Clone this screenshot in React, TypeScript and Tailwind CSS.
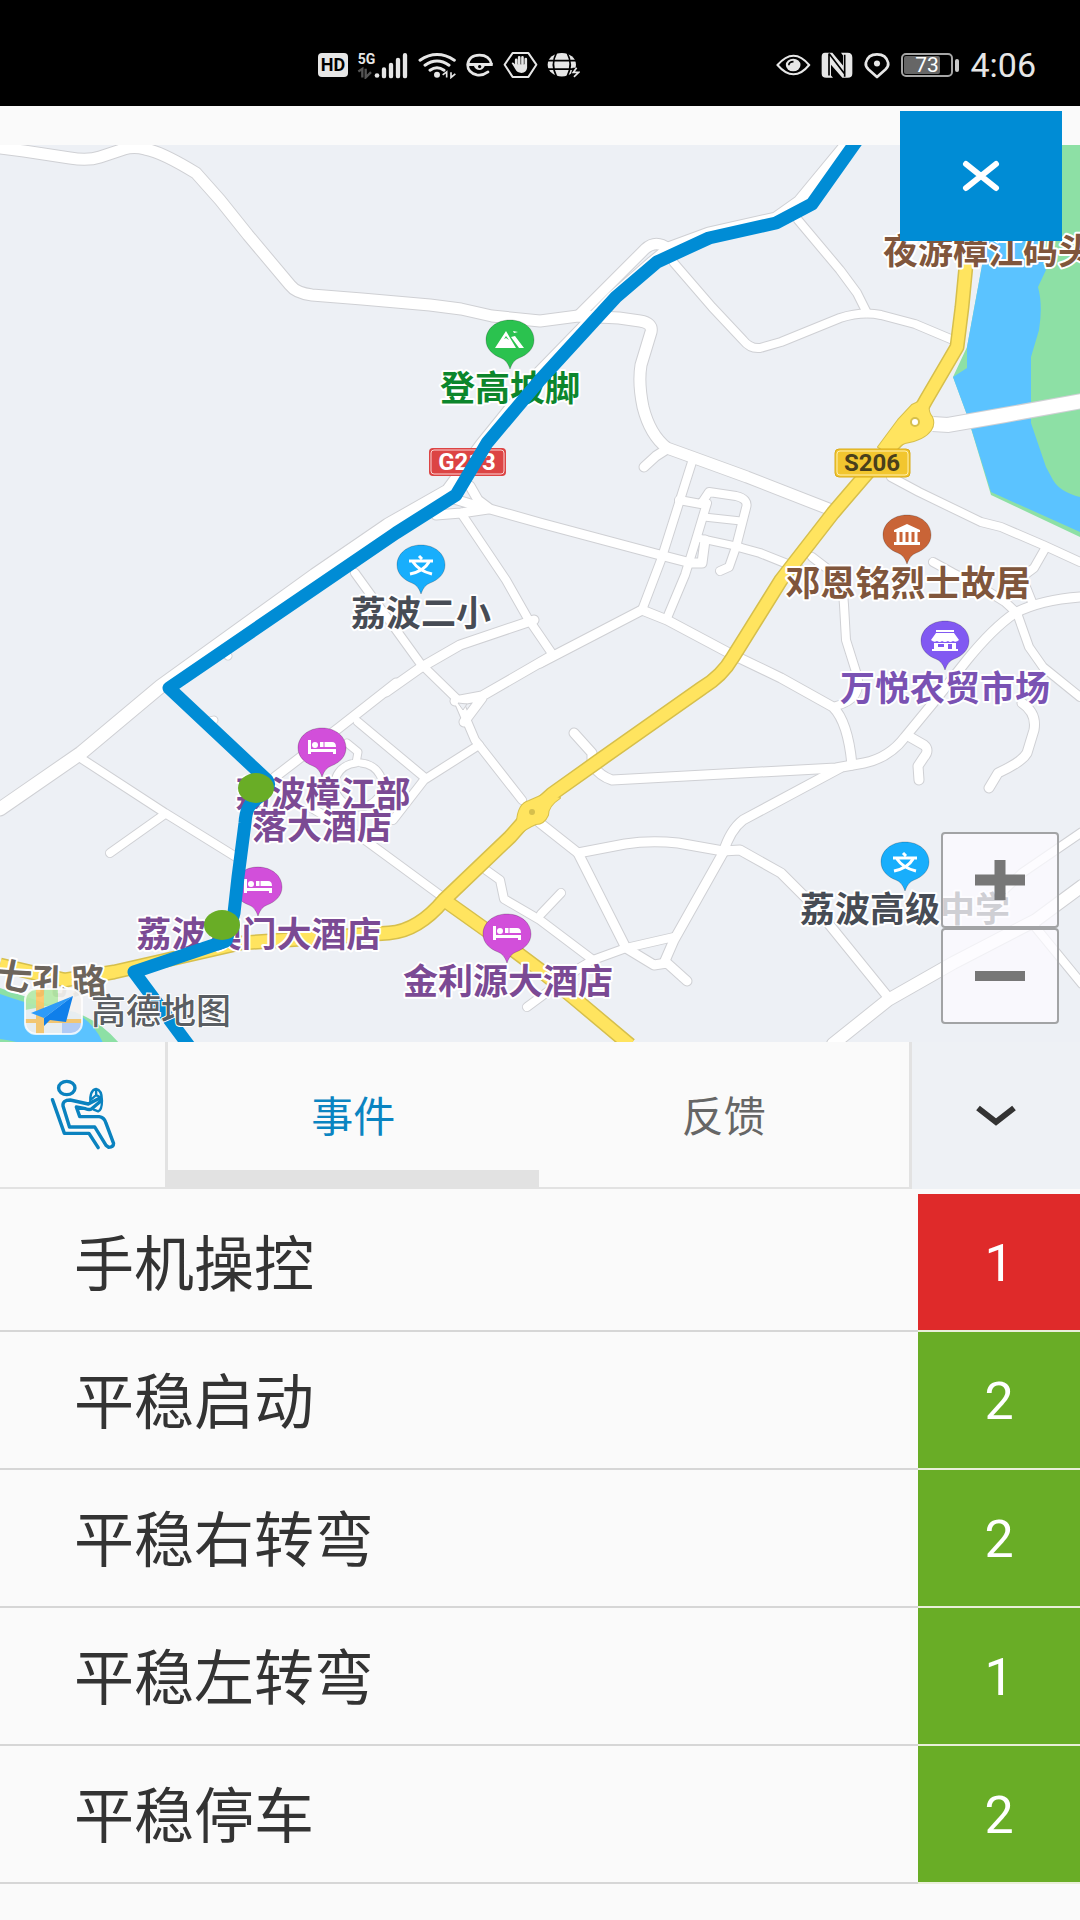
import React, { useState } from "react";

const fontStack = "font-[Roboto,'Noto_Sans_CJK_SC',sans-serif]";

const roads: { d: string; w: number }[] = [
  { w: 11, d: "M0 148 L24 151 L70 158 Q88 161 100 157 L124 149 Q134 146 145 149 Q162 152 196 173 L220 200 L248 235 L290 285 Q296 293 312 295 L362 299 L430 305 L461 309 L492 316 L540 321 L578 316 L619 318 L640 321 Q653 323 651 332 L641 365 Q638 383 643 407 Q650 435 667 448 L692 457 L747 477 L829 509" },
  { w: 9, d: "M667 449 L656 456 L644 467" },
  { w: 8, d: "M798 220 L840 270 L857 293 L867 313" },
  { w: 8, d: "M674 263 L712 307 L743 340 Q750 349 760 348 L781 342 L840 318 Q862 311 881 315 L915 324 L953 340" },
  { w: 13, d: "M847 145 L800 202 L776 219 L709 234 L671 248 L653 263 L612 299 L540 373 L482 445 L448 491 L388 525 L315 575 L161 686 L81 753 L0 809" },
  { w: 10, d: "M578 316 L645 249 Q656 239 669 249" },
  { w: 9, d: "M470 486 L478 500 L490 509 L540 523 L660 555 L691 563 L702 563 L705 540" },
  { w: 9, d: "M436 515 L461 513 L488 509 M454 499 L484 508" },
  { w: 8, d: "M461 513 L506 580 L527 617 L553 655" },
  { w: 8, d: "M355 573 L420 663 L458 700 L475 740 L522 800" },
  { w: 8, d: "M692 462 L661 560 L642 610" },
  { w: 8, d: "M679 500 L701 504 L709 492 L736 496 Q749 499 746 508 L736 547 L729 567 L720 571" },
  { w: 8, d: "M707 503 L695 543 L685 575 L667 618" },
  { w: 7, d: "M704 517 L741 521 M698 538 L740 547" },
  { w: 8, d: "M738 547 L760 553 L800 569" },
  { w: 8, d: "M812 557 L829 570 Q843 582 844 605 L846 640 L857 675 Q863 699 836 706" },
  { w: 8, d: "M891 477 L919 492 L981 522 L1001 527 L1043 545 L1080 562" },
  { w: 8, d: "M1046 547 L1034 568 L1022 577 L1032 602" },
  { w: 8, d: "M933 562 L953 573 L981 587 L1005 602 L1017 613 L1029 647 L1043 667 L1080 697" },
  { w: 9, d: "M1080 597 Q1040 600 1015 613 Q993 628 967 660 L933 703 L905 737 Q889 758 864 763 L836 768 L612 780 Q600 776 592 765 L592 753 L574 733" },
  { w: 9, d: "M840 768 L743 820 Q730 830 723 853 L674 940 L664 963" },
  { w: 9, d: "M910 737 L924 745 Q930 750 924 757 L918 766 L919 780" },
  { w: 9, d: "M1022 703 Q1037 713 1034 730 L1027 753 Q1022 762 998 773 L989 788" },
  { w: 9, d: "M386 692 L420 668 L460 645 L534 620 M540 663 L642 610 L667 620 L729 653 L781 678 L833 707 Q848 722 852 765" },
  { w: 9, d: "M553 655 L482 696 L455 701 M482 698 L464 722" },
  { w: 9, d: "M396 683 L340 727 L275 777" },
  { w: 8, d: "M358 722 L424 777 M479 745 L424 780 L393 820" },
  { w: 7, d: "M347 743 L358 752 L356 763 A24 22 0 1 0 361 763" },
  { w: 8, d: "M310 807 L365 840 L444 898" },
  { w: 8, d: "M79 757 L165 813 L236 857 M165 814 L110 853" },
  { w: 8, d: "M486 870 L500 880 L504 899 L540 920 L593 960 M561 893 L541 914" },
  { w: 8, d: "M527 1007 L581 967 L593 960 L626 948 L674 937" },
  { w: 9, d: "M540 823 L578 853 L626 948 L654 965 L667 963 L687 981" },
  { w: 9, d: "M578 853 L625 844 Q650 840 678 843 L723 851 L740 850 L781 873 L815 907 L888 997" },
  { w: 12, d: "M833 1044 L888 1000 L953 963 L1036 920 L1082 886" },
  { w: 8, d: "M1082 832 L1022 873 L985 908 M1032 923 L1082 984" },
  { w: 7, d: "M222 650 L228 656 M206 722 L214 720" },
];

const yellowRoads =
  "M967 255 L962 307 L957 347 L926 400 L912 425 L881 457 L833 513 L781 580 L733 657 Q722 676 702 688 L597 762 L552 794 L532 812 L510 837 L444 900 Q418 931 389 933 L241 943 L114 972 L65 980 L0 965 M444 900 L496 937 L540 970 L574 998 L630 1045";
const yellowJunctions =
  "M929 397 Q927 412 932 417 Q935 424 931 430 Q924 440 905 443 L886 451 L878 447 L898 420 L912 405 Z M517 822 Q518 804 529 801 L545 794 L560 798 Q548 806 548 815 Q544 824 536 824 Q526 828 517 836 L508 838 Z";

const routePath =
  "M858 139 L812 204 L776 223 L709 238 L657 262 L616 297 L540 380 L487 443 L456 495 L396 533 L169 688 L267 780 Q273 788 255 800 Q246 806 245 823 L238 877 L234 913 L226 941 L134 972 L192 1050";

type PinKind = "hill" | "school" | "bed" | "museum" | "shop";
const pins: { x: number; y: number; color: string; kind: PinKind }[] = [
  { x: 510, y: 340, color: "#2bc24f", kind: "hill" },
  { x: 421, y: 565, color: "#18aefc", kind: "school" },
  { x: 322, y: 748, color: "#d24fda", kind: "bed" },
  { x: 258, y: 887, color: "#d24fda", kind: "bed" },
  { x: 507, y: 934, color: "#d24fda", kind: "bed" },
  { x: 907, y: 535, color: "#c96437", kind: "museum" },
  { x: 945, y: 641, color: "#8159f2", kind: "shop" },
  { x: 905, y: 862, color: "#18aefc", kind: "school" },
];

const places: { x: number; y: number; color: string; text: string }[] = [
  { x: 510, y: 401, color: "#0c862c", text: "登高坡脚" },
  { x: 421, y: 626, color: "#474c55", text: "荔波二小" },
  { x: 323, y: 807, color: "#7b4a94", text: "荔波樟江部" },
  { x: 322, y: 839, color: "#7b4a94", text: "落大酒店" },
  { x: 259, y: 947, color: "#7b4a94", text: "荔波澳门大酒店" },
  { x: 508, y: 994, color: "#7b4a94", text: "金利源大酒店" },
  { x: 908, y: 596, color: "#80563c", text: "邓恩铭烈士故居" },
  { x: 945, y: 701, color: "#7a52b3", text: "万悦农贸市场" },
  { x: 905, y: 922, color: "#474c55", text: "荔波高级中学" },
  { x: 988, y: 264, color: "#80563c", text: "夜游樟江码头" },
];

const roadName: { x: number; y: number; turn: number; text: string }[] = [
  { x: 14, y: 976, turn: 12, text: "七" },
  { x: 50, y: 981, turn: 2, text: "孔" },
  { x: 89, y: 981, turn: -4, text: "路" },
];

function PinGlyph({ kind }: { kind: PinKind }) {
  if (kind === "hill")
    return (
      <g fill="#fff">
        <path fillRule="evenodd" d="M-15 8 L-4 -9 L6 8 Z M-6 -1 L-4 -4 L-1 0 L-4 -2 Z" />
        <path d="M1 -3 L5 -4 L14 8 L9 8 Z M3 -9 L8 -8 L4 -7 Z" />
      </g>
    );
  if (kind === "school")
    return <path d="M-2 -9 L1 -6 M-12 -4 H12 M-8 -3 Q-2 6 11 9 M8 -3 Q3 6 -11 9" fill="none" stroke="#fff" strokeWidth="3" />;
  if (kind === "bed")
    return (
      <g fill="#fff">
        <path d="M-14 -8 H-11 V1 H14 V6 H11 V4 H-11 V6 H-14 Z" />
        <circle cx="-7" cy="-3" r="3" />
        <path d="M-2 -6 H10 Q14 -6 14 -1 H-2 Z" />
        <path d="M2 -6 V-1" stroke="#d24fda" strokeWidth="1" />
      </g>
    );
  if (kind === "museum")
    return (
      <g fill="#fff">
        <path d="M0 -11 L13 -5 V-3 H-13 V-5 Z M-13 7 H13 V10 H-13 Z" />
        <path d="M-9 -3 V7 M-3 -3 V7 M3 -3 V7 M9 -3 V7" stroke="#fff" strokeWidth="3" />
      </g>
    );
  return (
    <g fill="#fff">
      <path d="M-9 -11 H9 V-9 H-9 Z M-9 -8 H9 L14 -1 Q11 2 8 0 Q5 2 3 0 Q0 2 -3 0 Q-5 2 -8 0 Q-11 2 -14 -1 Z" />
      <path fillRule="evenodd" d="M-11 2 H11 V8 H-11 Z M-7 3 V6 H-1 V3 Z M3 3 V8 H7 V3 Z M-13 8 H13 V10 H-13 Z" />
    </g>
  );
}

function MapCanvas() {
  return (
    <svg viewBox="0 145 1080 897" className="block h-auto w-full bg-[#edf0f5]" role="img" aria-label="行程地图">
      <path d="M960 145 H1080 V537 L991 495 L967 415 L953 377 L967 347 L983 260 Z" fill="#8de0a5" />
      <path d="M983 145 L983 260 L967 347 L967 368 L953 377 L967 415 L991 492 L1080 532 L1080 497 Q1060 492 1053 480 L1046 467 L1031 423 L1031 357 L1039 330 Q1043 305 1038 287 L1046 270 L1042 255 L1050 145 Z" fill="#5bc3ff" />
      <path d="M0 988 Q30 998 62 1009 Q95 1015 119 1043 H0 Z" fill="#8de0a5" />
      <path d="M0 994 Q45 1010 75 1012 Q95 1024 103 1043 H20 Q10 1040 0 1039 Z" fill="#5bc3ff" />

      <g fill="none" stroke="#cfd0d4" strokeLinecap="round" strokeLinejoin="round">
        {roads.map((r) => (
          <path key={r.d} d={r.d} strokeWidth={r.w + 2} />
        ))}
      </g>
      <g fill="none" stroke="#ffffff" strokeLinecap="round" strokeLinejoin="round">
        {roads.map((r) => (
          <path key={r.d} d={r.d} strokeWidth={r.w} />
        ))}
      </g>
      <path d="M933 424 L948 425 L1005 415 L1082 401" fill="none" stroke="#cfd0d4" strokeWidth="16" />
      <path d="M932 424 L948 425 L1005 415 L1082 401" fill="none" stroke="#ffffff" strokeWidth="14" />
      <path d="M458 703 L467 704 L463 710 Z" fill="#edf0f5" stroke="#cfd0d4" strokeWidth="1" />

      <path d={yellowJunctions} fill="#d6bf4c" stroke="#d6bf4c" strokeWidth="2" strokeLinejoin="round" />
      <path d={yellowRoads} fill="none" stroke="#d6bf4c" strokeWidth="15" strokeLinejoin="round" />
      <path d={yellowRoads} fill="none" stroke="#ffe45f" strokeWidth="12" strokeLinejoin="round" />
      <path d={yellowJunctions} fill="#ffe45f" />
      <circle cx="915" cy="422" r="4" fill="#fff" stroke="#d6bf4c" strokeWidth="2" />
      <circle cx="532" cy="812" r="3" fill="#d6bf4c" />

      {pins.map((p) => (
        <g key={`${p.x}-${p.y}`} transform={`translate(${p.x} ${p.y})`}>
          <path
            d="M0 -20 C14 -20 24 -11 24 0 C24 9 17 15 9 18 Q3 20 0 29 Q-3 20 -9 18 C-17 15 -24 9 -24 0 C-24 -11 -14 -20 0 -20 Z"
            fill={p.color}
            stroke="#00000033"
            strokeWidth="1"
          />
          <PinGlyph kind={p.kind} />
        </g>
      ))}

      <g fontSize="35" fontWeight="700" textAnchor="middle" strokeWidth="4" strokeLinejoin="round" stroke="#ffffff" className="[paint-order:stroke]">
        {places.map((p) => (
          <text key={p.text} x={p.x} y={p.y} fill={p.color}>
            {p.text}
          </text>
        ))}
        {roadName.map((p) => (
          <text key={p.text} transform={`translate(${p.x} ${p.y}) rotate(${p.turn})`} y="13" fill="#6d655c">
            {p.text}
          </text>
        ))}
      </g>

      <g fontSize="24" fontWeight="700" textAnchor="middle">
        <rect x="429" y="448" width="77" height="28" rx="4" fill="#dc4444" />
        <rect x="431" y="450" width="73" height="24" rx="3" fill="none" stroke="#fbd3d3" strokeWidth="1" />
        <text x="467" y="470" fill="#fff">G213</text>
        <rect x="835" y="449" width="75" height="28" rx="4" fill="#f2c62f" stroke="#d9ab1a" strokeWidth="1" />
        <rect x="837" y="451" width="71" height="24" rx="3" fill="none" stroke="#fff0b0" strokeWidth="1" />
        <text x="872" y="471" fill="#493f1c">S206</text>
      </g>

      <path d={routePath} fill="none" stroke="#008cd5" strokeWidth="13" strokeLinejoin="round" />
      <ellipse cx="256" cy="788" rx="18" ry="15" fill="#69ad26" />
      <ellipse cx="222" cy="925" rx="18" ry="15" fill="#69ad26" />

      <clipPath id="logo-tile">
        <rect x="25" y="989" width="57" height="45" rx="11" />
      </clipPath>
      <g clipPath="url(#logo-tile)" opacity="0.92">
        <rect x="25" y="989" width="57" height="45" fill="#f3f1ef" />
        <path d="M25 989 H58 V1004 L25 1010 Z" fill="#b5eaa8" />
        <path d="M62 1020 H82 V1034 H62 Z" fill="#b9cdf5" />
        <path d="M40 989 V1034" stroke="#ffc766" strokeWidth="8" fill="none" />
        <path d="M25 1021 H82" stroke="#ffc766" strokeWidth="4" fill="none" />
      </g>
      <rect x="25" y="989" width="57" height="45" rx="11" fill="none" stroke="#ffffff" strokeOpacity="0.8" strokeWidth="2" />
      <path d="M73 996 L31 1013 L44 1018 Z" fill="#2d9bf8" />
      <path d="M73 996 L44 1018 L44 1026 L50 1020 L66 1022 Z" fill="#0f7fea" />
      <text x="91" y="1024" fontSize="35" fontWeight="500" fill="#5a5e63" stroke="#ffffff" strokeWidth="2" className="[paint-order:stroke]">
        高德地图
      </text>
    </svg>
  );
}

function StatusBar() {
  return (
    <header className="flex h-[106px] items-center justify-between bg-black pt-6 pr-11 pl-[318px] text-[#e6e6e6]">
      <div className="flex items-center gap-[9px]">
        <svg viewBox="0 0 30 24" className="h-6 w-[30px]" role="img" aria-label="HD">
          <rect width="30" height="24" rx="4" fill="#e6e6e6" />
          <text x="15" y="18" fontSize="18" fontWeight="700" textAnchor="middle" fill="#000">HD</text>
        </svg>
        <svg viewBox="174 62 156 80" className="h-[27px] w-[52px]" role="img" aria-label="5G 信号">
          <text x="176" y="96" fontSize="42" fontWeight="700" fill="#e6e6e6">5G</text>
          <path d="M178 120 L190 112 V138 M200 112 V138 L216 122" stroke="#555" strokeWidth="7" fill="none" />
          <circle cx="234" cy="132" r="7" fill="#e6e6e6" />
          <path d="M255 114 V134 M276 100 V134 M297 85 V134 M318 71 V134" stroke="#e6e6e6" strokeWidth="13" strokeLinecap="round" />
        </svg>
        <svg viewBox="350 62 114 80" className="h-[27px] w-[38px]" role="img" aria-label="Wi-Fi">
          <path d="M356 86 Q407 52 459 86 M371 101 Q407 76 443 101 M386 116 Q407 101 428 116" stroke="#e6e6e6" strokeWidth="9" strokeLinecap="round" fill="none" />
          <circle cx="407" cy="130" r="9" fill="#e6e6e6" />
          <path d="M424 130 L436 121 V138 M449 122 V138 L462 127" stroke="#e6e6e6" strokeWidth="5" fill="none" />
        </svg>
        <svg viewBox="494 64 88 78" className="h-[26px] w-[29px]" aria-hidden="true">
          <path d="M564 124 Q548 136 530 133 Q502 126 502 102 Q506 73 538 73 Q568 73 574 99" stroke="#e6e6e6" strokeWidth="8" fill="none" strokeLinecap="round" />
          <path fillRule="evenodd" d="M502 97 H578 V106 H554 Q548 118 538 118 Q526 118 521 106 H502 Z M538 103 a5 5 0 1 0 1 0 Z" fill="#e6e6e6" />
        </svg>
        <svg viewBox="610 62 106 84" className="h-7 w-[35px]" aria-hidden="true">
          <path d="M639 68 H687 L711 103 L687 140 H639 L615 103 Z" fill="none" stroke="#e6e6e6" strokeWidth="6" strokeLinejoin="round" />
          <path d="M650 106 V88 M659 100 V81 M669 100 V81 M679 102 V86" stroke="#e6e6e6" strokeWidth="8" strokeLinecap="round" />
          <path d="M636 98 Q641 94 646 102 H683 V112 Q681 127 666 128 Q653 128 648 118 Z" fill="#e6e6e6" />
        </svg>
        <svg viewBox="740 66 98 76" className="h-[26px] w-[33px]" aria-hidden="true">
          <ellipse cx="784" cy="103" rx="42" ry="35" fill="#e6e6e6" />
          <path d="M742 91 H828 M742 116 H828 M768 68 Q750 102 768 138 M800 68 Q818 102 800 138" stroke="#000" strokeWidth="5" fill="none" />
          <path d="M816 112 H840 V142 H808 Z" fill="#000" />
          <path d="M828 112 L818 126 H834 L820 139" stroke="#e6e6e6" strokeWidth="5" fill="none" />
        </svg>
      </div>
      <div className="flex items-center gap-[10px]">
        <svg viewBox="52 66 104 72" className="h-6 w-[35px]" aria-hidden="true">
          <path d="M56 102 Q80 74 104 74 Q128 74 151 102 Q128 130 104 130 Q80 130 56 102 Z" fill="none" stroke="#e6e6e6" strokeWidth="6" />
          <ellipse cx="103" cy="102" rx="22" ry="19" fill="#e6e6e6" />
          <path d="M90 103 Q90 92 104 92" stroke="#000" strokeWidth="5" fill="none" />
        </svg>
        <svg viewBox="186 62 96 80" className="h-[27px] w-8" role="img" aria-label="NFC">
          <path d="M198 64 H220 L252 102 V72 L246 64 H266 Q280 64 280 78 V126 Q280 139 266 139 H250 L216 100 V132 L222 139 H202 Q188 139 188 126 V76 Q188 64 198 64 Z" fill="#e6e6e6" />
          <path d="M210 66 V132 M210 66 L256 126 M257 70 V136" stroke="#000" strokeWidth="5" fill="none" />
        </svg>
        <svg viewBox="310 62 82 80" className="h-[27px] w-7" aria-hidden="true">
          <path d="M351 136 L326 114 Q316 104 318 94 Q324 69 351 69 Q378 69 384 94 Q386 104 376 114 Z" fill="none" stroke="#e6e6e6" strokeWidth="8" strokeLinejoin="round" />
          <circle cx="351" cy="96" r="9" fill="#e6e6e6" />
        </svg>
        <svg viewBox="0 0 59 24" className="h-6 w-[59px]" role="img" aria-label="电量 73">
          <rect x="1" y="1" width="50" height="22" rx="4" fill="none" stroke="#a6a6a6" strokeWidth="2" />
          <rect x="3" y="3" width="36" height="18" rx="2" fill="#666" />
          <rect x="54" y="6" width="4" height="13" rx="2" fill="#c9c9c9" />
          <text x="26" y="19" fontSize="21" textAnchor="middle" fill="#fff">73</text>
        </svg>
        <time className="text-[34px] leading-none">4:06</time>
      </div>
    </header>
  );
}

function DriverIcon() {
  return (
    <svg viewBox="140 145 205 225" preserveAspectRatio="none" className="h-[75px] w-[70px]" aria-hidden="true">
      <g fill="none" stroke="#0a82bf" strokeWidth="10" strokeLinecap="round" strokeLinejoin="round">
        <ellipse cx="195" cy="178" rx="24" ry="20" />
        <path d="M153 213 L188 314 H260 L287 357" />
        <path d="M203 295 L184 232 Q182 214 205 214 L258 226 L288 210 Q298 208 294 218 L268 240 Q262 245 250 240 L223 235 L233 264 H290 Q304 266 309 281 L332 344 Q332 356 318 356 L310 350 L277 295 Z" />
        <path d="M264 222 Q262 184 281 181 Q298 184 298 216 Q298 244 287 248 L274 243 M268 211 L281 199 L296 207 M281 182 V199" strokeWidth="7" />
      </g>
    </svg>
  );
}

const events = [
  { name: "手机操控", count: 1, good: false },
  { name: "平稳启动", count: 2, good: true },
  { name: "平稳右转弯", count: 2, good: true },
  { name: "平稳左转弯", count: 1, good: true },
  { name: "平稳停车", count: 2, good: true },
];

const tabs = [
  { id: "events", label: "事件" },
  { id: "feedback", label: "反馈" },
];

export default function App() {
  const [tab, setTab] = useState("events");
  const zoomClass = "flex h-24 w-[118px] items-center justify-center rounded border-2 border-[#a2a3a5] bg-[#fcfbff]/75";
  return (
    <div className={`flex min-h-screen flex-col bg-[#fafafa] text-[#333] ${fontStack}`}>
      <StatusBar />
      <section className="relative pt-[39px]">
        <MapCanvas />
        <button type="button" aria-label="关闭" className="absolute top-[5px] right-[18px] flex h-[130px] w-[162px] items-center justify-center bg-[#008cd5]">
          <svg viewBox="0 0 38 32" className="h-8 w-[38px]" aria-hidden="true">
            <path d="M4 4 L34 28 M34 4 L4 28" stroke="#fff" strokeWidth="6" strokeLinecap="round" />
          </svg>
        </button>
        <div className="absolute right-[21px] bottom-[18px] flex flex-col">
          <button type="button" aria-label="放大" className={zoomClass}>
            <svg viewBox="0 0 50 40" className="h-10 w-[50px]" aria-hidden="true">
              <path d="M0 20 H50 M25 0 V40" stroke="#777" strokeWidth="11" />
            </svg>
          </button>
          <button type="button" aria-label="缩小" className={zoomClass}>
            <svg viewBox="0 0 50 10" className="h-[10px] w-[50px]" aria-hidden="true">
              <path d="M0 5 H50" stroke="#777" strokeWidth="10" />
            </svg>
          </button>
        </div>
      </section>

      <nav className="flex h-[147px]">
        <button type="button" aria-label="驾驶" className="flex w-[168px] items-center justify-center border-r-3 border-b-2 border-[#e2e2e2]">
          <DriverIcon />
        </button>
        <div role="tablist" className="flex flex-1 border-r-3 border-b-2 border-[#e2e2e2]">
          {tabs.map((t) => (
            <button
              key={t.id}
              type="button"
              role="tab"
              aria-selected={tab === t.id}
              onClick={() => setTab(t.id)}
              className="flex-1 border-b-[17px] border-transparent pt-6 text-[42px] leading-none text-[#666] aria-selected:border-[#e2e2e2] aria-selected:text-[#0a84c1]"
            >
              {t.label}
            </button>
          ))}
        </div>
        <button type="button" aria-label="收起" className="flex w-[168px] items-center justify-center bg-[#eef1f5]">
          <svg viewBox="0 0 42 22" className="h-[22px] w-[42px]" aria-hidden="true">
            <path d="M3 3 L21 17 L39 3" fill="none" stroke="#333" strokeWidth="6" />
          </svg>
        </button>
      </nav>

      <ul className="pt-[5px]">
        {events.map((e) => (
          <li key={e.name} className="flex h-[138px]">
            <span className="flex flex-1 items-center border-b-2 border-[#d6d6d6] pt-2 pl-[74px] text-[60px] leading-none">{e.name}</span>
            <span
              className={
                e.good
                  ? "flex w-[162px] items-center justify-center border-b-2 border-[#e9efd9] bg-[#69ad26] bg-clip-padding pt-1 text-[52px] leading-none text-white"
                  : "flex w-[162px] items-center justify-center border-b-2 border-[#e9efd9] bg-[#df2a2a] bg-clip-padding pt-1 text-[52px] leading-none text-white"
              }
            >
              {e.count}
            </span>
          </li>
        ))}
      </ul>
    </div>
  );
}
